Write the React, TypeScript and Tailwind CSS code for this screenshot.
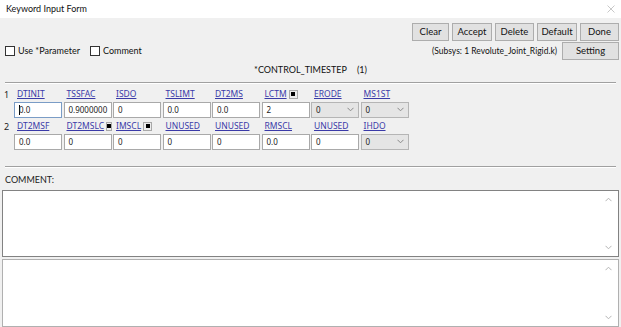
import React from "react";

const font = { fontFamily: '"Noto Sans", "Open Sans", sans-serif' };
const lato = { fontFamily: 'Lato, "Noto Sans", sans-serif' };

function Btn({ w, children }: { w: string; children: React.ReactNode }) {
  return (
    <div
      className={`h-[18px] ${w} flex items-center justify-center bg-[#e1e1e1] border border-[#adadad] text-[9.5px] text-[#111]`}
      style={lato}
    >
      {children}
    </div>
  );
}

function Dot() {
  return (
    <span className="ml-[2px] inline-flex w-[9px] h-[9px] items-center justify-center border border-[#a8a8a8] bg-[#ececec]">
      <span className="w-[4px] h-[4px] bg-black" />
    </span>
  );
}

type Cell = { label: string; value: string; dot?: boolean; select?: boolean; focus?: boolean };

const row1: Cell[] = [
  { label: "DTINIT", value: "0.0", focus: true },
  { label: "TSSFAC", value: "0.9000000" },
  { label: "ISDO", value: "0" },
  { label: "TSLIMT", value: "0.0" },
  { label: "DT2MS", value: "0.0" },
  { label: "LCTM", value: "2", dot: true },
  { label: "ERODE", value: "0", select: true },
  { label: "MS1ST", value: "0", select: true },
];
const row2: Cell[] = [
  { label: "DT2MSF", value: "0.0" },
  { label: "DT2MSLC", value: "0", dot: true },
  { label: "IMSCL", value: "0", dot: true },
  { label: "UNUSED", value: "0" },
  { label: "UNUSED", value: "0" },
  { label: "RMSCL", value: "0.0" },
  { label: "UNUSED", value: "0" },
  { label: "IHDO", value: "0", select: true },
];

function Field({ c }: { c: Cell }) {
  return (
    <div className="w-[48px] flex flex-col">
      <div className="h-[13px] flex items-center pl-[3px] whitespace-nowrap">
        <span className="text-[8.5px] text-[#3a3aa8] underline leading-none">{c.label}</span>
        {c.dot && <Dot />}
      </div>
      {c.select ? (
        <div className="mt-[1px] h-[16px] flex items-center justify-between bg-[#e5e5e5] border border-[#b5b5b5] pl-[4px] pr-[4px] text-[8px] text-[#222]">
          <span>{c.value}</span>
          <svg width="7" height="5" viewBox="0 0 7 5">
            <path d="M0.5 0.8 L3.5 3.8 L6.5 0.8" fill="none" stroke="#8a8a8a" strokeWidth="1" />
          </svg>
        </div>
      ) : (
        <div
          className={`mt-[1px] h-[16px] flex items-center bg-white border ${
            c.focus ? "border-[#7a9cc6]" : "border-[#a9a9a9]"
          } pl-[4px] text-[8px] text-[#222]`}
        >
          {c.focus && <span className="w-px h-[10px] bg-black mr-[-1px]" />}
          <span>{c.value}</span>
        </div>
      )}
    </div>
  );
}

function Row({ n, cells }: { n: string; cells: Cell[] }) {
  return (
    <div className="flex">
      <div className="w-[14px] h-[13px] flex items-center pl-[4px] text-[9px] text-[#222]">{n}</div>
      <div className="flex gap-[1.5px]">
        {cells.map((c, i) => (
          <Field key={i} c={c} />
        ))}
      </div>
    </div>
  );
}

function Scroll() {
  return (
    <div className="absolute right-[6px] top-0 bottom-0 flex flex-col justify-between py-[6px]">
      <svg width="7" height="5" viewBox="0 0 7 5">
        <path d="M0.5 4.2 L3.5 1.2 L6.5 4.2" fill="none" stroke="#b5b5b5" strokeWidth="1" />
      </svg>
      <svg width="7" height="5" viewBox="0 0 7 5">
        <path d="M0.5 0.8 L3.5 3.8 L6.5 0.8" fill="none" stroke="#b5b5b5" strokeWidth="1" />
      </svg>
    </div>
  );
}

function Check({ label }: { label: string }) {
  return (
    <div className="flex items-center gap-[3px]">
      <span className="w-[10px] h-[10px] bg-white border border-[#333]" />
      <span className="text-[9px] text-[#111]" style={lato}>{label}</span>
    </div>
  );
}

export default function App() {
  return (
    <div className="w-[621px] h-[327px] bg-[#f0f0f0] flex flex-col overflow-hidden" style={font}>
      <div className="h-[18px] bg-white flex items-center justify-between pl-[6px] pr-[6px]">
        <span className="text-[9px] text-[#111]" style={lato}>Keyword Input Form</span>
        <svg width="8" height="8" viewBox="0 0 8 8">
          <path d="M0.5 0.5 L7.5 7.5 M7.5 0.5 L0.5 7.5" stroke="#c8c8c8" strokeWidth="1" />
        </svg>
      </div>
      <div className="mt-[5px] flex justify-end gap-[3px] pr-[2px]">
        <Btn w="w-[37px]">Clear</Btn>
        <Btn w="w-[40px]">Accept</Btn>
        <Btn w="w-[39px]">Delete</Btn>
        <Btn w="w-[40px]">Default</Btn>
        <Btn w="w-[39px]">Done</Btn>
      </div>
      <div className="mt-[1px] flex items-center justify-between pl-[5px] pr-[2px]">
        <div className="flex items-center gap-[10px]">
          <Check label="Use *Parameter" />
          <Check label="Comment" />
        </div>
        <div className="flex items-center gap-[5px]">
          <span className="text-[8.5px] text-[#111]" style={lato}>(Subsys: 1 Revolute_Joint_Rigid.k)</span>
          <Btn w="w-[57px]">Setting</Btn>
        </div>
      </div>
      <div className="mt-[3px] h-[14px] flex items-center justify-center text-[9px] text-[#111]" style={lato}>
        <span>*CONTROL_TIMESTEP</span>
        <span className="ml-[10px]">(1)</span>
      </div>
      <div className="mt-[5px] mx-[5px] h-[2px] border-t border-[#a0a0a0] border-b border-b-white" />
      <div className="mt-[4px] flex flex-col gap-[2px]">
        <Row n="1" cells={row1} />
        <Row n="2" cells={row2} />
      </div>
      <div className="mt-[16px] mx-[5px] h-[2px] border-t border-[#a0a0a0] border-b border-b-white" />
      <div className="mt-[5px] h-[14px] flex items-center pl-[5px] text-[9px] text-[#222]" style={lato}>COMMENT:</div>
      <div className="mt-[3px] mx-[2px] h-[68px] relative bg-white border border-[#828282]">
        <Scroll />
      </div>
      <div className="mt-[2px] mx-[2px] h-[68px] relative bg-white border border-[#b0b0b0]">
        <Scroll />
      </div>
    </div>
  );
}
